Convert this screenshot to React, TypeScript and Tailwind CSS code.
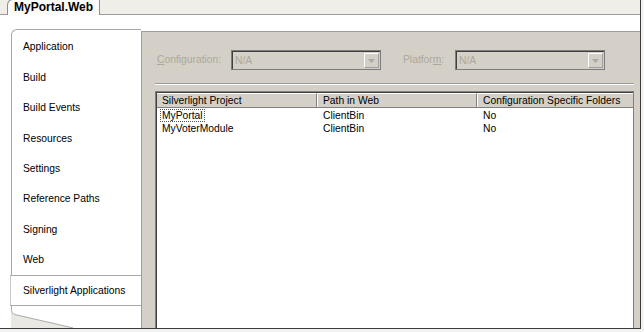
import React from 'react';

const navItems = ['Application', 'Build', 'Build Events', 'Resources', 'Settings', 'Reference Paths', 'Signing', 'Web'];

const rows = [
    { project: 'MyPortal', path: 'ClientBin', folders: 'No', focused: true },
    { project: 'MyVoterModule', path: 'ClientBin', folders: 'No', focused: false },
];

function Dropdown({ width }: { width: string }) {
    return (
        <div className={`${width} h-[20px] border border-[#7c7c7c]`}>
            <div className="h-full flex items-center border-t border-l border-[#404040] bg-[#d4d0c8] pl-[2px] pr-[1px]">
                <span className="flex-1 text-[#aca899]">N/A</span>
                <div className="w-[15px] h-[15px] flex items-center justify-center bg-[#d4d0c8] border border-t-white border-l-white border-b-[#a0a0a0] border-r-[#a0a0a0]">
                    <svg width="7" height="4" viewBox="0 0 7 4">
                        <path d="M0 0 H7 L3.5 4 Z" fill="#a8a8a8" />
                    </svg>
                </div>
            </div>
        </div>
    );
}

export default function App() {
    return (
        <div className="w-[644px] h-[332px] bg-[#f2f2f2] font-['Liberation_Sans',sans-serif] text-[10.3px] text-black">
            <div className="w-[641px] h-[329px] flex flex-col bg-white border-r border-b border-[#3c3c3c] overflow-hidden">
                {/* Document tab strip */}
                <div className="h-[15px] shrink-0 bg-[#efeee8] border-b border-[#9c9c9c] flex items-end pl-[7px]">
                    <div className="relative -mb-px h-[16px] px-[6px] bg-[#fbfbf9] border border-b-0 border-[#8f8f8f] rounded-tl-[6px] text-[12px] font-bold leading-[15px]">
                        MyPortal.Web
                    </div>
                </div>

                <div className="flex-1 flex pt-[14px] pl-[11px] min-h-0">
                    {/* Left navigation */}
                    <div className="w-[130px] flex flex-col">
                        <div className="border-l border-t border-[#a9a9a9] rounded-tl-[6px] pt-[2px]">
                            {navItems.map((item) => (
                                <div key={item} className="h-[30.4px] flex items-center pl-[11px]">
                                    {item}
                                </div>
                            ))}
                        </div>
                        <div className="h-[31px] flex items-center pl-[12px] -ml-px bg-white border-t border-b border-l border-[#a9a9a9] border-l-[#c8c8c8]">
                            Silverlight Applications
                        </div>
                        <svg className="flex-1 w-[130px]" viewBox="0 0 130 23" preserveAspectRatio="none">
                            <path d="M0 0 V5 Q0 8 4 9 L62 23 H0 Z" fill="#e9e8e2" />
                            <path d="M0.5 0 V5 Q0.5 8 4 9 L62 23" fill="none" stroke="#a9a9a9" strokeWidth="1" />
                        </svg>
                    </div>

                    {/* Right panel */}
                    <div className="flex-1 mt-[2px] bg-[#d4d0c8] border-t border-l border-[#9d9d9d] flex flex-col pl-[13px] pr-[6px] pt-[18px]">
                        <div className="flex items-center h-[20px]">
                            <span className="w-[76px] pl-[2px] text-[#aca899]">
                                <span className="underline">C</span>onfiguration:
                            </span>
                            <Dropdown width="w-[150px]" />
                            <span className="w-[52px] ml-[22px] text-[#aca899]">
                                Platfor<span className="underline">m</span>:
                            </span>
                            <Dropdown width="w-[150px]" />
                        </div>

                        <div className="mt-[13px] border-t border-b border-t-[#9a9a9a] border-b-white" />

                        <div className="mt-[6px] flex-1 border-t border-l border-r border-[#808080]">
                            <div className="h-full bg-white border-t border-l border-[#404040]">
                                {/* Header */}
                                <div className="flex h-[15px] bg-[#d4d0c8] border-b border-[#808080]">
                                    <div className="w-[160px] pl-[5px] leading-[14px] border-r border-[#808080] border-t border-t-white">Silverlight Project</div>
                                    <div className="w-[160px] pl-[5px] leading-[14px] border-r border-[#808080] border-t border-t-white border-l border-l-white">Path in Web</div>
                                    <div className="flex-1 pl-[5px] leading-[14px] border-t border-t-white border-l border-l-white">Configuration Specific Folders</div>
                                </div>
                                {/* Rows */}
                                <div className="pt-[1px]">
                                    {rows.map((r) => (
                                        <div key={r.project} className="flex h-[13px] leading-[13px]">
                                            <div className="w-[160px] pl-[4px]">
                                                <span className={`px-[1px] ${r.focused ? 'outline outline-1 outline-dotted outline-[#555]' : ''}`}>
                                                    {r.project}
                                                </span>
                                            </div>
                                            <div className="w-[160px] pl-[6px]">{r.path}</div>
                                            <div className="flex-1 pl-[6px]">{r.folders}</div>
                                        </div>
                                    ))}
                                </div>
                            </div>
                        </div>
                    </div>
                </div>
            </div>
        </div>
    );
}
